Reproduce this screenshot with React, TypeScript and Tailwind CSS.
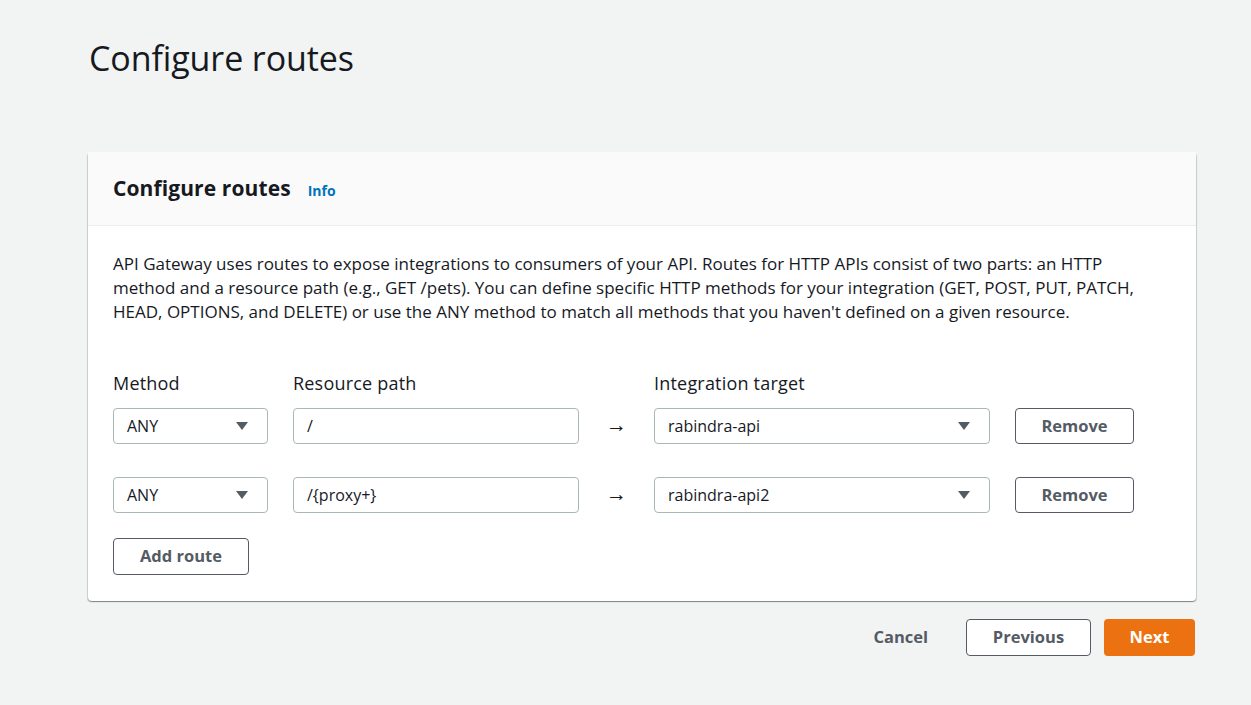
const routes = [
  { method: "ANY", path: "/", target: "rabindra-api" },
  { method: "ANY", path: "/{proxy+}", target: "rabindra-api2" },
];

function Caret() {
  return (
    <svg width="14" height="10" viewBox="0 0 14 10" aria-hidden="true">
      <path d="M1 1h12L7 9z" fill="#545b64" />
    </svg>
  );
}

function SelectBox({ value, width }: { value: string; width: string }) {
  return (
    <div
      className={`flex h-9 items-center justify-between rounded-sm border border-[#aab7b8] bg-white pl-[13px] pr-[18px] ${width}`}
    >
      <span>{value}</span>
      <Caret />
    </div>
  );
}

export default function App() {
  return (
    <div
      className="min-h-[705px] bg-[#f2f3f3] px-[88px] pt-[36px] text-[16px] text-[#16191f]"
      style={{ fontFamily: '"Open Sans", "Noto Sans", Arial, sans-serif' }}
    >
      <h1 className="pl-px text-[34px] leading-[44px] tracking-[-0.1px]">Configure routes</h1>

      <section className="mt-[72px] w-[1108px] rounded-sm bg-white shadow-[0_1px_1px_rgba(0,28,36,0.3),1px_1px_1px_rgba(0,28,36,0.15),-1px_1px_1px_rgba(0,28,36,0.15)]">
        <header className="flex h-[74px] items-center gap-[17px] border-b border-[#eaeded] bg-[#fafafa] px-[25px]">
          <h2 className="text-[21px] font-bold tracking-[0.1px]">Configure routes</h2>
          <a className="pt-[3px] text-[14px] font-bold text-[#0073bb]">Info</a>
        </header>

        <div className="px-[25px] pb-[26px] pt-[26px]">
          <p className="max-w-[1052px] text-[17px] leading-[24px]">
            API Gateway uses routes to expose integrations to consumers of your API. Routes for HTTP APIs consist of two
            parts: an HTTP method and a resource path (e.g., GET /pets). You can define specific HTTP methods for your
            integration (GET, POST, PUT, PATCH, HEAD, OPTIONS, and DELETE) or use the ANY method to match all methods
            that you haven't defined on a given resource.
          </p>

          <div className="mt-[47px] flex text-[18px] leading-[24px] tracking-[0.2px]">
            <span className="w-[180px]">Method</span>
            <span className="w-[361px]">Resource path</span>
            <span>Integration target</span>
          </div>

          <div className="mt-[13px] flex flex-col gap-[33px]">
            {routes.map((r) => (
              <div key={r.path} className="flex items-center">
                <SelectBox value={r.method} width="w-[155px]" />
                <div className="ml-[25px] flex h-9 w-[286px] items-center rounded-sm border border-[#aab7b8] bg-white px-[13px]">
                  {r.path}
                </div>
                <span className="w-[75px] pb-[3px] text-center text-[21px] leading-none">→</span>
                <SelectBox value={r.target} width="w-[336px]" />
                <button className="ml-[25px] h-9 w-[119px] rounded-sm border border-[#545b64] bg-white text-[16.5px] font-bold text-[#545b64]">
                  Remove
                </button>
              </div>
            ))}
          </div>

          <button className="mt-[25px] h-[37px] w-[136px] rounded-sm border border-[#545b64] bg-white text-[16.5px] font-bold text-[#545b64]">
            Add route
          </button>
        </div>
      </section>

      <div className="mt-[18px] flex w-[1107px] items-center justify-end text-[16.5px] font-bold">
        <button className="mr-[38px] text-[#545b64]">Cancel</button>
        <button className="h-[37px] w-[125px] rounded-sm border border-[#545b64] bg-white text-[#545b64]">
          Previous
        </button>
        <button className="ml-[13px] h-[37px] w-[91px] rounded-sm bg-[#ec7211] text-white">Next</button>
      </div>
    </div>
  );
}
